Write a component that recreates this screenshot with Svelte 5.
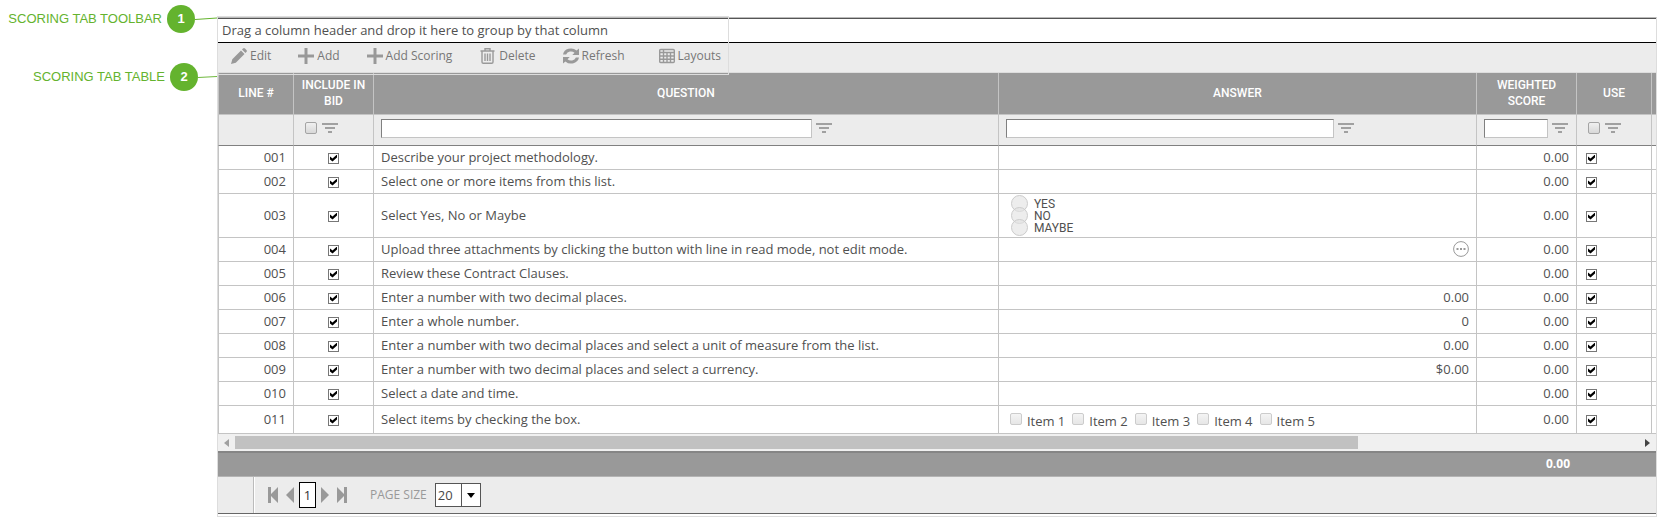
<script>
    let rows = [
        { line: "001", question: "Describe your project methodology." },
        { line: "002", question: "Select one or more items from this list." },
        { line: "003", question: "Select Yes, No or Maybe", options: ["YES", "NO", "MAYBE"] },
        { line: "004", question: "Upload three attachments by clicking the button with line in read mode, not edit mode.", attach: true },
        { line: "005", question: "Review these Contract Clauses." },
        { line: "006", question: "Enter a number with two decimal places.", answer: "0.00" },
        { line: "007", question: "Enter a whole number.", answer: "0" },
        { line: "008", question: "Enter a number with two decimal places and select a unit of measure from the list.", answer: "0.00" },
        { line: "009", question: "Enter a number with two decimal places and select a currency.", answer: "$0.00" },
        { line: "010", question: "Select a date and time." },
        { line: "011", question: "Select items by checking the box.", items: ["Item 1", "Item 2", "Item 3", "Item 4", "Item 5"] },
    ].map((row) => ({ ...row, include: true, use: true, score: "0.00" }));

    let pageSize = "20";
</script>

<div class="page">
    <aside class="callouts">
        <div class="callout first">
            <span>SCORING TAB TOOLBAR</span>
            <b>1</b>
            <svg viewBox="0 0 22 4" preserveAspectRatio="none"><path d="M0 2.5 22 1" /></svg>
        </div>
        <div class="callout second">
            <span>SCORING TAB TABLE</span>
            <b>2</b>
            <svg viewBox="0 0 22 4" preserveAspectRatio="none"><path d="M0 2.5 22 1.5" /></svg>
        </div>
    </aside>

    <main class="grid">
        <div class="outline"></div>
        <div class="group-panel">Drag a column header and drop it here to group by that column</div>

        <div class="toolbar">
            <button>
                <svg width="16" height="16" viewBox="0 0 16 16"><path d="M0 16 1.3 11.2 10 2.5 13.5 6 4.8 14.7zM11 1.5 12 .6q1-1 2 0L15.4 2q1 1 0 2l-1 1z" /></svg>
                Edit
            </button>
            <button>
                <svg width="16" height="16" viewBox="0 0 16 16"><path d="M6.5 0h3v6.5H16v3H9.5V16h-3V9.5H0v-3h6.5z" /></svg>
                Add
            </button>
            <button>
                <svg width="16" height="16" viewBox="0 0 16 16"><path d="M6.5 0h3v6.5H16v3H9.5V16h-3V9.5H0v-3h6.5z" /></svg>
                Add Scoring
            </button>
            <button class="delete">
                <svg class="line" width="16" height="16" viewBox="0 0 16 16"><path d="M.5 3h14M5 2.5V.7h5v1.8M2 3v11q0 1.3 1.3 1.3h8.4q1.3 0 1.3-1.3V3M5 5.5V13M7.5 5.5V13M10 5.5V13" /></svg>
                Delete
            </button>
            <button>
                <svg width="16" height="16" viewBox="0 0 16 16"><path d="M0 6.5A8 7.2 0 0 1 13.6 2.6L16 .5V7H9.3l2.2-2.3A5.3 5 0 0 0 3.1 6.5zM16 9.5A8 7.2 0 0 1 2.4 13.4L0 15.5V9h6.7l-2.2 2.3A5.3 5 0 0 0 12.9 9.5z" /></svg>
                Refresh
            </button>
            <button class="layouts">
                <svg class="line" width="16" height="16" viewBox="0 0 16 16"><path d="M1.7 1.5h12.6q1 0 1 1v11q0 1-1 1H1.7q-1 0-1-1v-11q0-1 1-1zM1 4.5h14M1 8h14M1 11.3h14M4.5 2v12M8 4v10M11.5 4v10" /></svg>
                Layouts
            </button>
        </div>

        <table>
            {@render columns()}
            <thead>
                <tr class="head">
                    <th>LINE #</th>
                    <th>INCLUDE IN BID</th>
                    <th>QUESTION</th>
                    <th>ANSWER</th>
                    <th>WEIGHTED SCORE</th>
                    <th>USE</th>
                    <th></th>
                </tr>
                <tr class="filters">
                    <td></td>
                    <td>{@render filterBox("Include in bid filter")}</td>
                    <td>{@render filterText("Question filter")}</td>
                    <td>{@render filterText("Answer filter")}</td>
                    <td>{@render filterText("Weighted score filter")}</td>
                    <td>{@render filterBox("Use filter")}</td>
                    <td></td>
                </tr>
            </thead>
            <tbody>
                {#each rows as row}
                    <tr class:tall={row.options} class:medium={row.items}>
                        <td class="right">{row.line}</td>
                        <td class="center"><input class="check" type="checkbox" aria-label="Include line {row.line}" bind:checked={row.include} /></td>
                        <td>{row.question}</td>
                        <td class="right">
                            {#if row.options}
                                <div class="options">
                                    {#each row.options as option}
                                        <label><input type="radio" name="answer-{row.line}" value={option} />{option}</label>
                                    {/each}
                                </div>
                            {:else if row.items}
                                <div class="items">
                                    {#each row.items as item}
                                        <label><input class="soft" type="checkbox" />{item}</label>
                                    {/each}
                                </div>
                            {:else if row.attach}
                                <button class="attach" aria-label="Attachments">
                                    <svg width="16" height="16" viewBox="0 0 16 16"><circle cx="8" cy="8" r="7.4" /><path d="M3.5 7h2v2h-2zM7 7h2v2H7zM10.5 7h2v2h-2z" /></svg>
                                </button>
                            {:else}
                                {row.answer ?? ""}
                            {/if}
                        </td>
                        <td class="right">{row.score}</td>
                        <td class="use"><input class="check" type="checkbox" aria-label="Use line {row.line}" bind:checked={row.use} /></td>
                        <td></td>
                    </tr>
                {/each}
            </tbody>
        </table>

        <div class="scrollbar">
            <button aria-label="Scroll left"><svg width="5" height="8" viewBox="0 0 5 8"><path fill="#a0a0a0" d="M5 0v8L0 4z" /></svg></button>
            <div class="track"><div class="thumb"></div></div>
            <button aria-label="Scroll right"><svg width="5" height="8" viewBox="0 0 5 8"><path fill="#444" d="M0 0v8l5-4z" /></svg></button>
        </div>

        <table class="totals">
            {@render columns()}
            <tbody>
                <tr><td></td><td></td><td></td><td></td><td class="right">0.00</td><td></td><td></td></tr>
            </tbody>
        </table>

        <div class="pager">
            <div class="pager-side"></div>
            <nav>
                <button aria-label="First page"><svg width="10" height="16" viewBox="0 0 10 16"><path d="M0 0h3v7l7-7v16L3 9v7H0z" /></svg></button>
                <button aria-label="Previous page"><svg width="8" height="16" viewBox="0 0 8 16"><path d="M8 0v16L0 8z" /></svg></button>
                <button class="current">1</button>
                <button aria-label="Next page"><svg width="8" height="16" viewBox="0 0 8 16"><path d="M0 0v16l8-8z" /></svg></button>
                <button aria-label="Last page"><svg width="10" height="16" viewBox="0 0 10 16"><path d="M10 0H7v7L0 0v16l7-7v7h3z" /></svg></button>
            </nav>
            <label for="page-size">PAGE SIZE</label>
            <div class="select">
                <select id="page-size" bind:value={pageSize}>
                    <option>10</option>
                    <option>20</option>
                    <option>50</option>
                </select>
                <span class="arrow"><svg width="8" height="5" viewBox="0 0 8 5"><path d="M0 0h8L4 5z" /></svg></span>
            </div>
        </div>
    </main>
</div>

{#snippet columns()}
    <colgroup>
        <col class="c-line" />
        <col class="c-include" />
        <col class="c-question" />
        <col class="c-answer" />
        <col class="c-score" />
        <col class="c-use" />
        <col class="c-rest" />
    </colgroup>
{/snippet}

{#snippet filterIcon(label)}
    <button aria-label={label}>
        <svg width="16" height="11" viewBox="0 0 16 11"><path d="M0 0h16v2H0zM3 4h10v2H3zM6 8h4v2H6z" /></svg>
    </button>
{/snippet}

{#snippet filterText(label)}
    <div class="filter">
        <input type="text" aria-label={label} />
        {@render filterIcon(label + " options")}
    </div>
{/snippet}

{#snippet filterBox(label)}
    <div class="filter box">
        <input type="checkbox" class="soft dark" aria-label={label} />
        {@render filterIcon(label + " options")}
    </div>
{/snippet}

<style>
    :global(body) {
        background: #fff;
    }
    .page {
        display: flex;
        padding: 5px 5px 5px 0;
        font: 13px/16px "Open Sans", sans-serif;
        color: #505050;
    }
    button {
        font: inherit;
        color: inherit;
        background: none;
        border: 0;
        padding: 0;
        cursor: pointer;
    }
    svg {
        display: block;
        flex: none;
    }
    input {
        margin: 0;
        box-sizing: border-box;
    }

    /* CALLOUTS */
    .callouts {
        flex: none;
        width: 217px;
        font: 13px/28px "Liberation Sans", Arial, sans-serif;
        color: #64b32e;
    }
    .callout {
        display: flex;
        align-items: center;
        justify-content: flex-end;
        height: 28px;
        white-space: nowrap;
    }
    .callout b {
        width: 28px;
        height: 28px;
        margin-left: 5px;
        border-radius: 50%;
        background: #64b32e;
        color: #fff;
        text-align: center;
    }
    .callout svg {
        width: 22px;
        height: 4px;
    }
    .callout path {
        fill: none;
        stroke: #64b32e;
    }
    .second {
        margin-top: 30px;
    }
    .second svg {
        width: 19px;
    }

    /* GRID */
    .grid {
        position: relative;
        flex: 1;
        min-width: 0;
        margin-top: 12px;
        padding-bottom: 2px;
        border: 1px solid #ddd;
        border-top-color: #bbb;
    }
    .outline {
        position: absolute;
        top: -2px;
        left: -1px;
        width: 510px;
        height: 57px;
        border: 1px solid #ddd;
        pointer-events: none;
    }
    .group-panel {
        padding: 3px 4px 4px;
        border-top: 1px solid #555;
        border-bottom: 1px solid #000;
    }
    .toolbar {
        display: flex;
        align-items: center;
        gap: 27px;
        height: 29px;
        padding: 0 13px;
        background: #ececec;
        border-bottom: 1px solid #ddd;
        font-size: 12px;
        color: #777;
    }
    .toolbar button {
        display: flex;
        align-items: center;
        gap: 3px;
        padding-bottom: 3px;
    }
    .toolbar .delete {
        margin-left: 1px;
    }
    .toolbar .layouts {
        margin-left: 7px;
    }
    .toolbar svg {
        fill: #999;
    }
    .toolbar .line {
        fill: none;
        stroke: #999;
        stroke-width: 1.4;
    }

    /* TABLE */
    table {
        width: 100%;
        table-layout: fixed;
        border-collapse: separate;
        border-spacing: 0;
    }
    .c-line { width: 76px; }
    .c-include { width: 80px; }
    .c-answer { width: 33.25%; }
    .c-score { width: 100px; }
    .c-use { width: 75px; }
    .c-rest { width: 4px; }
    th, td {
        height: 21px;
        padding: 0 7px 2px;
        border-right: 1px solid #c4c4c4;
        border-bottom: 1px solid #c4c4c4;
        text-align: left;
        overflow: hidden;
        white-space: nowrap;
    }
    th:first-child, td:first-child {
        border-left: 1px solid #c4c4c4;
    }
    th:last-child, td:last-child {
        padding: 0;
        border-right: 0;
    }
    .head th {
        height: 39px;
        background: #999;
        color: #fff;
        font-family: Roboto, sans-serif;
        font-size: 12px;
        font-weight: 500;
        text-align: center;
        white-space: normal;
    }
    .filters td {
        height: 30px;
        padding-bottom: 0;
        background: #ececec;
        border-bottom-color: #808080;
    }
    .tall td {
        height: 41px;
    }
    .medium td {
        height: 25px;
    }
    td.right {
        text-align: right;
    }
    td.center {
        text-align: center;
    }
    td.use {
        padding-left: 9px;
    }

    .filter {
        display: flex;
        align-items: center;
        gap: 4px;
        padding-bottom: 4px;
    }
    .filter.box {
        gap: 5px;
        padding: 0 0 4px 4px;
    }
    .filter input[type="text"] {
        width: calc(70% + 4px);
        height: 19px;
        border: 1px solid #c4c4c4;
        border-top-color: #808080;
        border-left-color: #808080;
        background: #fff;
    }
    .filter svg {
        fill: #a0a0a0;
    }

    input[type="checkbox"], input[type="radio"] {
        appearance: none;
        flex: none;
    }
    .check {
        display: inline-block;
        width: 11px;
        height: 11px;
        border: 1px solid #777;
        background: #fff;
        vertical-align: middle;
    }
    .check:checked::after {
        content: "";
        display: block;
        width: 7px;
        height: 7px;
        margin: 1px;
        background: #000;
        clip-path: polygon(0 29%, 36% 58%, 100% 0, 100% 43%, 36% 100%, 0 72%);
    }
    .soft {
        width: 12px;
        height: 12px;
        border: 1px solid #ccc;
        border-radius: 2px;
        background: linear-gradient(#f4f4f4, #e6e6e6);
    }
    .soft.dark {
        border-color: #a4a4a4;
        background: linear-gradient(#f0f0f0, #d8d8d8);
    }

    .options {
        display: flex;
        flex-direction: column;
        padding: 2px 0 0 5px;
        font-family: Roboto, sans-serif;
        font-size: 12px;
        line-height: 12px;
    }
    .options label {
        display: flex;
        align-items: center;
        gap: 6px;
        height: 12px;
    }
    .options input {
        width: 17px;
        height: 17px;
        border: 1px solid #ccc;
        border-radius: 50%;
        background: rgba(225, 225, 225, 0.6);
    }
    .items {
        display: flex;
        gap: 7px;
        padding: 4px 0 0 4px;
    }
    .items label {
        display: flex;
        gap: 5px;
    }
    .attach {
        display: inline-block;
        vertical-align: middle;
    }
    .attach circle {
        fill: none;
        stroke: #999;
    }
    .attach path {
        fill: #999;
    }

    /* SCROLLBAR AND TOTALS */
    .scrollbar {
        display: flex;
        height: 17px;
        background: #f0f0f0;
    }
    .scrollbar button {
        display: flex;
        align-items: center;
        justify-content: center;
        width: 17px;
    }
    .track {
        flex: 1;
        padding: 2px 0;
    }
    .thumb {
        width: 80%;
        height: 13px;
        background: #c1c1c1;
    }
    .totals td {
        border: 0;
        border-top: 2px solid #858585;
        border-bottom: 1px solid #b4b4b4;
        background: #999;
        color: #fff;
        font-size: 12px;
        font-weight: 700;
    }

    /* PAGER */
    .pager {
        display: flex;
        align-items: center;
        height: 36px;
        background: #ececec;
        border-bottom: 1px solid #666;
    }
    .pager-side {
        align-self: stretch;
        width: 35px;
        border-right: 1px solid #bbb;
        box-shadow: 1px 0 #fff;
    }
    .pager nav {
        display: flex;
        align-items: center;
        gap: 5px;
        margin: 0 23px 0 14px;
    }
    .pager nav svg {
        fill: #999;
    }
    .pager nav button:first-child {
        margin-right: 3px;
    }
    .pager nav button:last-child {
        margin-left: 3px;
    }
    .pager .current {
        width: 17px;
        height: 26px;
        border: 1px solid #000;
        background: #fff;
        color: #333;
    }
    .pager label {
        font-size: 12px;
        color: #999;
    }
    .select {
        position: relative;
        margin-left: 8px;
    }
    .select select {
        display: block;
        width: 46px;
        height: 24px;
        box-sizing: border-box;
        padding: 0 2px;
        border: 1px solid #555;
        border-radius: 0;
        appearance: none;
        background: #fff;
        font: inherit;
        color: #484848;
    }
    .arrow {
        position: absolute;
        top: 1px;
        right: 1px;
        bottom: 1px;
        display: flex;
        align-items: center;
        justify-content: center;
        width: 18px;
        border-left: 1px solid #555;
        pointer-events: none;
    }
</style>
